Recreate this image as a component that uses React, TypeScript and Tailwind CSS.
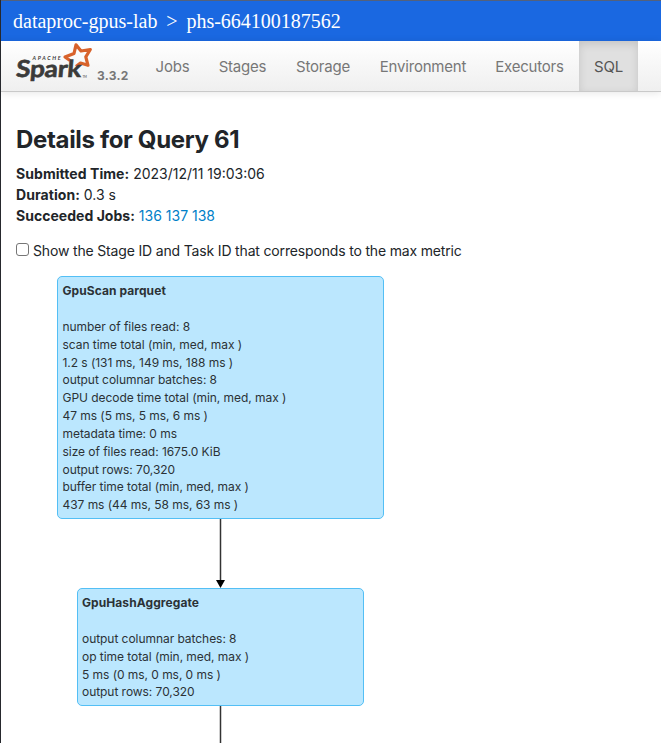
import React from "react";

const tabs = [
  { label: "Jobs", width: "w-[63px]" },
  { label: "Stages", width: "w-[77px]" },
  { label: "Storage", width: "w-[84px]" },
  { label: "Environment", width: "w-[116px]" },
  { label: "Executors", width: "w-[97px]" },
];

const scanMetrics = [
  "number of files read: 8",
  "scan time total (min, med, max )",
  "1.2 s (131 ms, 149 ms, 188 ms )",
  "output columnar batches: 8",
  "GPU decode time total (min, med, max )",
  "47 ms (5 ms, 5 ms, 6 ms )",
  "metadata time: 0 ms",
  "size of files read: 1675.0 KiB",
  "output rows: 70,320",
  "buffer time total (min, med, max )",
  "437 ms (44 ms, 58 ms, 63 ms )",
];

const aggregateMetrics = [
  "output columnar batches: 8",
  "op time total (min, med, max )",
  "5 ms (0 ms, 0 ms, 0 ms )",
  "output rows: 70,320",
];

function SparkLogo() {
  return (
    <svg width="82" height="50" viewBox="0 0 82 50" className="shrink-0 overflow-visible" aria-label="Apache Spark">
      <path
        d="M55 19.5 L50 16 L59 12.5 L61 3.8 L66 10 L75.3 8.5 L70.8 15.8 L73 24.3 L65.5 22 L61 25.5"
        fill="none"
        stroke="#d8622b"
        strokeWidth="3.2"
        strokeLinejoin="round"
      />
      <g fontFamily="Lato, sans-serif" fill="#3b3b3a">
        <text transform="translate(0.5 35.5) skewX(-5)" fontSize="23.5" fontWeight="700" textLength="65" lengthAdjust="spacingAndGlyphs" stroke="#3b3b3a" strokeWidth="0.6">
          Spark
        </text>
        <text x="17.5" y="19.2" fontSize="5.4" fontWeight="700" fontStyle="italic" textLength="28">
          APACHE
        </text>
        <text x="67.5" y="36.5" fontSize="3">TM</text>
      </g>
    </svg>
  );
}

function PlanNode({ title, metrics, className }: { title: string; metrics: string[]; className: string }) {
  return (
    <section className={`rounded-[5px] border border-[#53bff5] bg-[#bbe7fe] pt-[5px] text-[12px] leading-[17.85px] tracking-[-0.05px] text-[#2b3236] ${className}`}>
      <h2 className="mb-[18px] font-bold tracking-[0.08px]">{title}</h2>
      {metrics.map((metric) => (
        <p key={metric}>{metric}</p>
      ))}
    </section>
  );
}

export default function App() {
  return (
    <div className="h-[743px] w-[661px] overflow-hidden border-l border-[#26282d] bg-white font-['Inter',sans-serif] text-[#212529]">
      <header className="flex h-[41px] items-center border-t border-[#53617c] bg-[#1a68e1] pl-3 font-['Liberation_Serif',serif] text-[20px] text-white">
        <span className="whitespace-pre">dataproc-gpus-lab</span>
        <span className="w-[29px] text-center">&gt;</span>
        <span>phs-664100187562</span>
      </header>

      <nav className="flex h-[51px] border-b border-[#c9c9c9] bg-gradient-to-b from-white to-[#efefef] text-[15px] tracking-[-0.2px] text-[#777] shadow-[0_1px_8px_rgba(0,0,0,0.1)]">
        <div className="flex w-[140px] pl-[14px]">
          <SparkLogo />
          <span className="pt-[26px] text-[12px] font-bold leading-[17px] tracking-[0.02em] text-[#777]">3.3.2</span>
        </div>
        {tabs.map((tab) => (
          <a key={tab.label} className={`flex shrink-0 items-center justify-center whitespace-nowrap pt-0.5 ${tab.width}`}>
            {tab.label}
          </a>
        ))}
        <a className="ml-px flex w-[59px] shrink-0 items-center justify-center bg-[#e0e0e0] pt-0.5 text-[#555] shadow-[inset_0_3px_8px_rgba(0,0,0,0.125)]">SQL</a>
      </nav>

      <main className="pl-[15px]">
        <h1 className="pt-[33px] text-[24px] font-bold leading-[29px] tracking-[-0.33px]">Details for Query 61</h1>
        <ul className="mt-[9px] text-[14px] leading-[21px]">
          <li><strong className="tracking-[0.06px]">Submitted Time:</strong> 2023/12/11 19:03:06</li>
          <li><strong className="tracking-[0.06px]">Duration:</strong> 0.3 s</li>
          <li><strong className="tracking-[0.03px]">Succeeded Jobs:</strong> <span className="text-[#0080c8]">136 137 138</span></li>
        </ul>
        <label className="mt-[14px] flex h-[21px] items-center text-[14px] leading-[21px]">
          <input type="checkbox" className="mb-0.5 mr-1 size-[13px] appearance-none rounded-[3px] border border-[#767676] bg-white" />
          <span className="tracking-[-0.165px]">Show the Stage ID and Task ID that corresponds to the max metric</span>
        </label>
        <div className="ml-[41px] mt-[15px] flex w-[327px] flex-col items-center">
          <PlanNode title="GpuScan parquet" metrics={scanMetrics} className="h-[243px] w-[327px] pl-[4.5px]" />
          <svg width="11" height="69" viewBox="0 0 11 69">
            <path d="M5.5 0V62" stroke="#333" strokeWidth="1.5" />
            <path d="M1 61H10L5.5 69Z" fill="#000" />
          </svg>
          <PlanNode title="GpuHashAggregate" metrics={aggregateMetrics} className="h-[118px] w-[287px] pl-[4px]" />
          <svg width="11" height="37" viewBox="0 0 11 37">
            <path d="M5.5 0V37" stroke="#333" strokeWidth="1.5" />
          </svg>
        </div>
      </main>
    </div>
  );
}
